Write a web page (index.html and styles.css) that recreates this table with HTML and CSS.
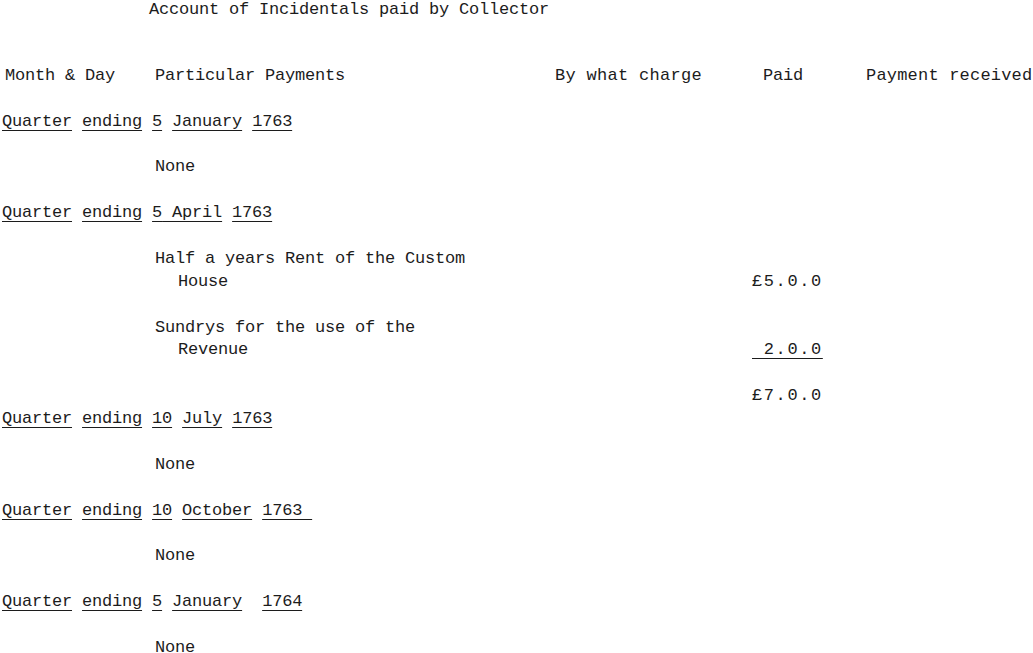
FILE: index.html
```html
<!DOCTYPE html>
<html lang="en">
<head>
<meta charset="utf-8">
<title>Account of Incidentals paid by Collector</title>
<link rel="stylesheet" href="styles.css">
</head>
<body>
<main class="sheet">
  <h1 class="title">Account of Incidentals paid by Collector</h1>

  <div class="row head">
    <span class="c-date">Month &amp; Day</span>
    <span class="c-part">Particular Payments</span>
    <span class="c-charge">By what charge</span>
    <span class="c-paid">Paid</span>
    <span class="c-recv">Payment received</span>
  </div>

  <section class="quarter">
    <div class="qhead"><u>Quarter</u> <u>ending</u> <u>5</u> <u>January</u> <u>1763</u></div>
    <div class="row entry"><span></span><span class="c-part">None</span></div>
  </section>

  <section class="quarter">
    <div class="qhead"><u>Quarter</u> <u>ending</u> <u>5</u><u>&nbsp;April</u> <u>1763</u></div>
    <div class="row entry">
      <span></span>
      <span class="c-part">Half a years Rent of the Custom<br><span class="cont">House</span></span>
      <span></span>
      <span class="c-amt">£5.0.0</span>
    </div>
    <div class="row entry">
      <span></span>
      <span class="c-part">Sundrys for the use of the<br><span class="cont">Revenue</span></span>
      <span></span>
      <span class="c-amt"><u>&nbsp;2.0.0</u></span>
    </div>
    <div class="row entry total">
      <span></span><span></span><span></span>
      <span class="c-amt">£7.0.0</span>
    </div>
  </section>

  <section class="quarter tight">
    <div class="qhead"><u>Quarter</u> <u>ending</u> <u>10</u> <u>July</u> <u>1763</u></div>
    <div class="row entry"><span></span><span class="c-part">None</span></div>
  </section>

  <section class="quarter">
    <div class="qhead"><u>Quarter</u> <u>ending</u> <u>10</u> <u>October</u> <u>1763&nbsp;</u></div>
    <div class="row entry"><span></span><span class="c-part">None</span></div>
  </section>

  <section class="quarter">
    <div class="qhead"><u>Quarter</u> <u>ending</u> <u>5</u> <u>January</u>&nbsp; <u>1764</u></div>
    <div class="row entry"><span></span><span class="c-part">None</span></div>
  </section>
</main>
</body>
</html>
```

FILE: styles.css
```css
html, body {
  margin: 0;
  padding: 0;
  background: #ffffff;
}

body {
  font-family: "Liberation Mono", "Courier New", monospace;
  font-size: 17px;
  letter-spacing: -0.2px;
  line-height: 22.88px;
  color: #1c1c1c;
}

.sheet {
  padding: 0 0 0 2px;
  margin-top: -1px;
}

.title {
  font: inherit;
  margin: 0 0 43px 147px;
  font-weight: normal;
}

.row {
  display: grid;
  grid-template-columns: 153px 400px 197px 114px 1fr;
  align-items: end;
}

.head .c-date { padding-left: 3px; }
.head .c-charge { letter-spacing: 0.3px; }
.head .c-paid { padding-left: 11px; }
.head .c-recv { white-space: nowrap; letter-spacing: 0.2px; }

.quarter { margin-top: 22.88px; }
.quarter.tight { margin-top: 0; }

.qhead { white-space: pre; }

u {
  text-decoration: underline;
  text-decoration-thickness: 1px;
  text-underline-offset: 4px;
}

.entry { margin-top: 22.88px; }

.cont { padding-left: 23px; }

.c-amt {
  letter-spacing: 1.6px;
  white-space: pre;
}
```
